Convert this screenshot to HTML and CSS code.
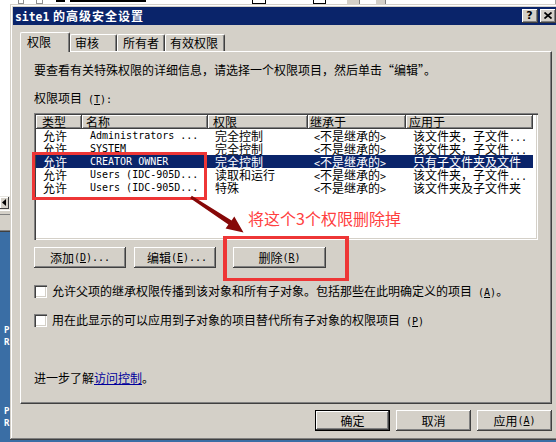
FILE: index.html
```html
<!DOCTYPE html>
<html>
<head>
<meta charset="utf-8">
<link rel="stylesheet" href="styles.css">
</head>
<body>
<div class="desktop">
  <div class="bgwin">
    <div class="bg-view">
      <span class="frag g1"></span>
      <span class="frag g2"></span>
      <span class="frag t1"></span>
      <span class="frag t2"></span>
      <span class="frag t3"></span>
      <span class="frag k1"></span>
      <span class="frag k2"></span>
      <span class="frag g3"></span>
      <span class="frag g4"></span>
    </div>
    <div class="bg-scroll"><span class="sarrow">
      <svg width="9" height="11" viewBox="0 0 9 11"><path d="M6 2 L2 5.5 L6 9 Z" fill="#000"/></svg>
    </span></div>
    <div class="bg-status"></div>
  </div>
  <div class="deskicon d1">P<br>R</div>
  <div class="deskicon d2">P<br>R</div>

  <div class="dialog">
    <div class="titlebar">
      <div class="title"><span class="tm">site1</span> 的高级安全设置</div>
      <div class="tbtns">
        <span class="tbtn help">?</span>
        <span class="tbtn"><svg width="8" height="7" viewBox="0 0 8 7"><path d="M0.5 0.5 L7.5 6.5 M7.5 0.5 L0.5 6.5" stroke="#000" stroke-width="1.7"/></svg></span>
      </div>
    </div>
    <div class="client">
      <div class="tabs">
        <div class="tab active">权限</div>
        <div class="tab t2">审核</div>
        <div class="tab t3">所有者</div>
        <div class="tab t4">有效权限</div>
      </div>
      <div class="panel">
        <p class="intro">要查看有关特殊权限的详细信息，请选择一个权限项目，然后单击“编辑”。</p>
        <p class="label">权限项目<span class="m"> (<u>T</u>):</span></p>
        <div class="list">
          <div class="hrow">
            <span class="h c1">类型</span>
            <span class="h c2">名称</span>
            <span class="h c3">权限</span>
            <span class="h c4">继承于</span>
            <span class="h c5">应用于</span>
          </div>
          <div class="row">
            <span class="c c1">允许</span><span class="c c2 m">Administrators ...</span><span class="c c3">完全控制</span><span class="c c4"><span class="m">&lt;</span>不是继承的<span class="m">&gt;</span></span><span class="c c5">该文件夹，子文件<span class="m">...</span></span>
          </div>
          <div class="row">
            <span class="c c1">允许</span><span class="c c2 m">SYSTEM</span><span class="c c3">完全控制</span><span class="c c4"><span class="m">&lt;</span>不是继承的<span class="m">&gt;</span></span><span class="c c5">该文件夹，子文件<span class="m">...</span></span>
          </div>
          <div class="row sel">
            <span class="c c1">允许</span><span class="c c2 m">CREATOR OWNER</span><span class="c c3">完全控制</span><span class="c c4"><span class="m">&lt;</span>不是继承的<span class="m">&gt;</span></span><span class="c c5">只有子文件夹及文件</span>
          </div>
          <div class="row">
            <span class="c c1">允许</span><span class="c c2 m">Users (IDC-905D...</span><span class="c c3">读取和运行</span><span class="c c4"><span class="m">&lt;</span>不是继承的<span class="m">&gt;</span></span><span class="c c5">该文件夹，子文件<span class="m">...</span></span>
          </div>
          <div class="row">
            <span class="c c1">允许</span><span class="c c2 m">Users (IDC-905D...</span><span class="c c3">特殊</span><span class="c c4"><span class="m">&lt;</span>不是继承的<span class="m">&gt;</span></span><span class="c c5">该文件夹及子文件夹</span>
          </div>
        </div>
        <div class="btnrow">
          <div class="btn b-add">添加<span class="m"> (<u>D</u>)...</span></div>
          <div class="btn b-edit">编辑<span class="m"> (<u>E</u>)...</span></div>
          <div class="btn b-del">删除<span class="m"> (<u>R</u>)</span></div>
        </div>
        <div class="chk chk1"><span class="cb"></span><span>允许父项的继承权限传播到该对象和所有子对象。包括那些在此明确定义的项目<span class="m"> (<u>A</u>)</span>。</span></div>
        <div class="chk chk2"><span class="cb"></span><span>用在此显示的可以应用到子对象的项目替代所有子对象的权限项目<span class="m"> (<u>P</u>)</span></span></div>
        <p class="more">进一步了解<a class="link">访问控制</a>。</p>
      </div>
      <div class="footer">
        <div class="btn fbtn dflt">确定</div>
        <div class="btn fbtn">取消</div>
        <div class="btn fbtn">应用<span class="m"> (<u>A</u>)</span></div>
      </div>
    </div>
  </div>

  <div class="redbox r1"></div>
  <div class="redbox r2"></div>
  <svg class="arrow" width="556" height="442" viewBox="0 0 556 442">
    <polygon points="191.8,195.8 231.6,220.6 234.3,216.6 243.5,232.5 225.6,228.6 228.4,224.6 190.2,198.2" fill="#860808"/>
  </svg>
  <div class="note">将这个3个权限删除掉</div>
</div>
</body>
</html>
```

FILE: styles.css
```css
* { box-sizing: border-box; }
html, body { margin: 0; padding: 0; }
body {
  width: 556px;
  height: 442px;
  overflow: hidden;
  font-family: "Noto Sans CJK SC", "Noto Sans", sans-serif;
  font-size: 12px;
  color: #000;
}
p { margin: 0; }

.m {
  font-family: "DejaVu Sans Mono", "Liberation Mono", monospace;
  font-size: 10px;
}

.desktop {
  position: relative;
  width: 556px;
  height: 442px;
  background: #3a6ea5;
  overflow: hidden;
}

/* window behind the dialog */
.bgwin {
  position: absolute;
  left: 0;
  top: 0;
  width: 556px;
  height: 232px;
  display: flex;
  flex-direction: column;
  background: #d4d0c8;
  box-shadow: inset 0 -1px #404040, inset 0 -2px #808080;
}
.bg-view {
  position: relative;
  height: 196px;
  background: #fff;
  box-shadow: inset -1px 0 #a0a0a0;
}
.frag { position: absolute; top: 0; height: 4px; }
.g1 { left: 18px; width: 6px; border: 1px solid #909090; border-top: 0; }
.g2 { left: 36px; width: 7px; border: 1px solid #909090; border-top: 0; }
.t1 { left: 56px; width: 9px; height: 2px; background: #000; }
.t2 { left: 70px; width: 20px; height: 2px; background: #000; }
.t3 { left: 98px; width: 40px; height: 2px; background: #000; }
.k1 { left: 252px; width: 14px; border: 1px solid #000; border-top: 0; }
.k2 { left: 313px; width: 13px; border: 1px solid #000; border-top: 0; }
.g3 { left: 346px; width: 14px; background: #d4d0c8; box-shadow: inset -1px 0 #808080, inset 1px 0 #fff; }
.g4 { left: 376px; width: 10px; background: #d4d0c8; box-shadow: inset -1px 0 #808080; }
.bg-scroll {
  height: 14px;
  background: #e8e6e0;
  padding: 1px 0 0 0;
}
.sarrow {
  display: flex;
  width: 9px;
  height: 12px;
  background: #d4d0c8;
  box-shadow: inset -1px -1px #404040, inset 1px 1px #fff;
}
.bg-status {
  height: 20px;
  background: #d4d0c8;
  box-shadow: inset 0 1px #fff, inset 0 4px #d4d0c8, inset 0 5px #808080;
}

.deskicon {
  position: absolute;
  left: 4px;
  color: #fff;
  font-family: "DejaVu Sans Mono", monospace;
  font-weight: bold;
  font-size: 9px;
  line-height: 12px;
}
.d1 { top: 324px; }
.d2 { top: 405px; }

/* dialog */
.dialog {
  position: absolute;
  left: 10px;
  top: 4px;
  width: 551px;
  height: 436px;
  padding: 3px;
  background: #d4d0c8;
  box-shadow: inset -1px -1px #404040, inset 1px 1px #d4d0c8, inset -2px -2px #808080, inset 2px 2px #fff;
  display: flex;
  flex-direction: column;
}
.titlebar {
  height: 18px;
  background: #0a246a;
  color: #fff;
  display: flex;
  align-items: center;
  padding-left: 2px;
  flex: none;
}
.title {
  font-weight: bold;
  font-size: 12px;
  letter-spacing: 1px;
  line-height: 18px;
  white-space: nowrap;
}
.tm {
  font-family: "DejaVu Sans Mono", monospace;
  font-size: 11.4px;
  letter-spacing: 0;
}
.tbtns {
  margin-left: auto;
  margin-right: 2px;
  display: flex;
  gap: 2px;
}
.tbtn {
  width: 16px;
  height: 14px;
  background: #d4d0c8;
  box-shadow: inset -1px -1px #404040, inset 1px 1px #fff, inset -2px -2px #808080;
  display: flex;
  align-items: center;
  justify-content: center;
  color: #000;
}
.tbtn svg { margin: 0 1px 1px 0; }
.help {
  font-family: "DejaVu Sans", sans-serif;
  font-weight: bold;
  font-size: 11px;
  line-height: 14px;
  padding-right: 1px;
}

.client {
  flex: 1;
  padding: 0 6px 0 7px;
  display: flex;
  flex-direction: column;
}

/* tabs */
.tabs {
  height: 26px;
  display: flex;
  align-items: flex-end;
  flex: none;
}
.tab {
  height: 17px;
  background: #d4d0c8;
  border-top: 1px solid #fff;
  border-left: 1px solid #fff;
  border-right: 1px solid #404040;
  border-radius: 2px 2px 0 0;
  box-shadow: inset -1px 0 #808080;
  line-height: 14px;
  padding-top: 1px;
  white-space: nowrap;
}
.tab.active {
  position: relative;
  z-index: 2;
  height: 20px;
  margin-bottom: -1px;
  width: 50px;
  padding-left: 6px;
  padding-top: 2px;
}
.t2 { width: 47px; padding-left: 4px; }
.t3 { width: 48px; padding-left: 5px; }
.t4 { width: 60px; padding-left: 4px; }

/* panel */
.panel {
  width: 532px;
  height: 353px;
  flex: none;
  background: #d4d0c8;
  border-top: 1px solid #fff;
  border-left: 1px solid #fff;
  border-right: 1px solid #404040;
  border-bottom: 1px solid #404040;
  box-shadow: inset -1px -1px #808080;
  padding-left: 13px;
}
.intro {
  margin-top: 11px;
  line-height: 14px;
  white-space: nowrap;
}
.label {
  margin-top: 14px;
  line-height: 14px;
}

.list {
  margin-top: 6px;
  width: 504px;
  height: 127px;
  background: #fff;
  padding: 2px;
  box-shadow: inset 1px 1px #808080, inset 2px 2px #404040, inset -1px -1px #fff, inset -2px -2px #d4d0c8;
}
.hrow, .row {
  display: flex;
  white-space: nowrap;
}
.hrow { height: 14px; }
.row { height: 13px; }
.h, .c {
  display: block;
  flex: none;
  white-space: nowrap;
}
.h {
  height: 14px;
  line-height: 14px;
  background: #d4d0c8;
  box-shadow: inset -1px -1px #404040, inset 1px 1px #fff, inset -2px -2px #808080;
}
.c { height: 13px; line-height: 13px; }
.c1 { width: 46px; }
.c2 { width: 126px; }
.c3 { width: 100px; }
.c4 { width: 98px; }
.c5 { width: 127px; }
.h.c1 { padding-left: 6px; }
.h.c2 { padding-left: 4px; }
.h.c3 { padding-left: 5px; }
.h.c4 { padding-left: 2px; }
.h.c5 { padding-left: 3px; }
.c.c1 { padding-left: 7px; }
.c.c2 { padding-left: 8px; }
.c.c3 { padding-left: 7px; }
.c.c4 { padding-left: 6px; }
.c.c5 { padding-left: 7px; }
.row.sel {
  background: #0a246a;
  color: #fff;
  width: 497px;
}

/* buttons */
.btnrow {
  margin-top: 7px;
  display: flex;
  height: 21px;
}
.btn {
  height: 21px;
  background: #d4d0c8;
  box-shadow: inset -1px -1px #404040, inset 1px 1px #fff, inset -2px -2px #808080;
  display: flex;
  align-items: center;
  justify-content: center;
  line-height: 14px;
  white-space: nowrap;
  flex: none;
}
.b-add { width: 92px; }
.b-edit { width: 82px; margin-left: 8px; padding-left: 4px; }
.b-del { width: 93px; margin-left: 17px; }

.chk {
  display: flex;
  align-items: center;
  height: 13px;
  line-height: 13px;
  white-space: nowrap;
}
.chk1 { margin-top: 17px; }
.chk2 { margin-top: 16px; }
.cb {
  width: 13px;
  height: 13px;
  flex: none;
  background: #fff;
  margin-right: 5px;
  box-shadow: inset 1px 1px #808080, inset 2px 2px #404040, inset -1px -1px #fff, inset -2px -2px #d4d0c8;
}
.more {
  margin-top: 44px;
  line-height: 14px;
}
.link {
  color: #00009c;
  text-decoration: underline;
}

.footer {
  margin-top: 6px;
  display: flex;
  justify-content: flex-end;
  gap: 6px;
  width: 532px;
}
.fbtn { width: 75px; }
.btn.dflt {
  box-shadow: inset 0 0 0 1px #000, inset -2px -2px #404040, inset 2px 2px #fff, inset -3px -3px #808080;
}

/* annotations */
.redbox {
  position: absolute;
  border: 3px solid #ee3636;
  z-index: 5;
}
.r1 { left: 32px; top: 152px; width: 175px; height: 48px; }
.r2 { left: 223px; top: 236px; width: 126px; height: 45px; border-width: 3px 4px; }
.arrow {
  position: absolute;
  left: 0;
  top: 0;
  z-index: 6;
  pointer-events: none;
}
.note {
  position: absolute;
  left: 248px;
  top: 207px;
  font-size: 16px;
  line-height: 22px;
  color: #ff4040;
  white-space: nowrap;
  z-index: 6;
}
```
